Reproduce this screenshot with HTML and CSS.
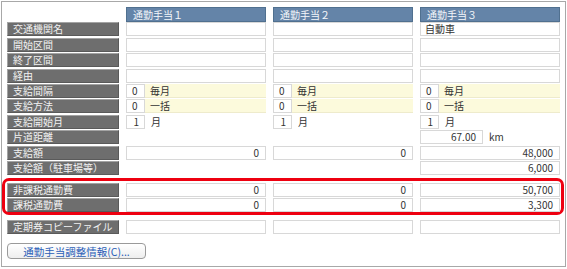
FILE: index.html
```html
<!DOCTYPE html>
<html lang="ja">
<head>
    <meta charset="UTF-8">
    <title>通勤手当</title>
    <link rel="stylesheet" href="styles.css">
</head>
<body>
    <div class="frame">
        <div class="sheet">
            <div></div>
            <div class="head">通勤手当１</div>
            <div class="head">通勤手当２</div>
            <div class="head">通勤手当３</div>

            <div class="label">交通機関名</div>
            <div class="cell"></div>
            <div class="cell"></div>
            <div class="cell">自動車</div>

            <div class="label">開始区間</div>
            <div class="cell"></div>
            <div class="cell"></div>
            <div class="cell"></div>

            <div class="label">終了区間</div>
            <div class="cell"></div>
            <div class="cell"></div>
            <div class="cell"></div>

            <div class="label">経由</div>
            <div class="cell"></div>
            <div class="cell"></div>
            <div class="cell"></div>

            <div class="label">支給間隔</div>
            <div class="pair"><span class="code">0</span><span class="pick">毎月</span></div>
            <div class="pair"><span class="code">0</span><span class="pick">毎月</span></div>
            <div class="pair"><span class="code">0</span><span class="pick">毎月</span></div>

            <div class="label">支給方法</div>
            <div class="pair"><span class="code">0</span><span class="pick">一括</span></div>
            <div class="pair"><span class="code">0</span><span class="pick">一括</span></div>
            <div class="pair"><span class="code">0</span><span class="pick">一括</span></div>

            <div class="label">支給開始月</div>
            <div class="pair"><span class="code num">1</span><span class="unit">月</span></div>
            <div class="pair"><span class="code num">1</span><span class="unit">月</span></div>
            <div class="pair"><span class="code num">1</span><span class="unit">月</span></div>

            <div class="label">片道距離</div>
            <div></div>
            <div></div>
            <div class="pair"><span class="dist">67.00</span><span class="unit">km</span></div>

            <div class="label">支給額</div>
            <div class="cell num">0</div>
            <div class="cell num">0</div>
            <div class="cell num">48,000</div>

            <div class="label">支給額（駐車場等）</div>
            <div></div>
            <div></div>
            <div class="cell num">6,000</div>
        </div>

        <div class="sheet marked">
            <div class="label">非課税通勤費</div>
            <div class="cell num">0</div>
            <div class="cell num">0</div>
            <div class="cell num">50,700</div>

            <div class="label">課税通勤費</div>
            <div class="cell num">0</div>
            <div class="cell num">0</div>
            <div class="cell num">3,300</div>
        </div>

        <div class="sheet copy">
            <div class="label">定期券コピーファイル</div>
            <div class="cell"></div>
            <div class="cell"></div>
            <div class="cell"></div>
        </div>

        <button class="adjust">通勤手当調整情報(C)...</button>
    </div>
</body>
</html>
```

FILE: styles.css
```css
body {
    margin: 1px;
    background-color: #ffffff;
    font-family: "Noto Sans CJK JP", "Noto Sans", sans-serif;
    font-size: 10px;
    color: #333333;
}

.frame {
    box-sizing: border-box;
    width: 565px;
    height: 266px;
    border: 1px solid #a8a8a8;
    padding: 5px 5px 0 5px;
}

/* 表 */
.sheet {
    display: grid;
    grid-template-columns: 112px 140px 140px 140px;
    grid-auto-rows: 14px;
    column-gap: 7px;
    row-gap: 1.4px;
    line-height: 12px;
}

.sheet > div {
    box-sizing: border-box;
    white-space: nowrap;
}

.head {
    height: 15px;
    background-color: #6484a8;
    border: 1px solid #50708f;
    color: #f4f7fb;
    padding-left: 6px;
    line-height: 13px;
}

.label {
    background-color: #6e6e6e;
    border: 1px solid #a3a3a3;
    border-right-color: #5a5a5a;
    border-bottom-color: #5a5a5a;
    color: #f2f2f2;
    padding-left: 5px;
}

.cell {
    background-color: #ffffff;
    border: 1px solid #d8d8d8;
    padding: 0 4px;
}

.num {
    text-align: right;
    padding-right: 6px;
}

.pair {
    display: flex;
}

.code {
    box-sizing: border-box;
    width: 19px;
    border: 1px solid #d8d8d8;
    background-color: #ffffff;
    padding-left: 5px;
}

.code.num {
    padding-right: 5px;
}

.pick {
    flex: 1;
    background-color: #fcfadc;
    border-bottom: 1px solid #eeebcc;
    padding-left: 5px;
    line-height: 14px;
}

.dist {
    box-sizing: border-box;
    width: 63px;
    border: 1px solid #d8d8d8;
    text-align: right;
    padding-right: 6px;
}

.unit {
    padding-left: 6px;
    line-height: 14px;
}

/* 赤枠 */
.marked {
    margin: 3px -4px 0 -5px;
    padding: 2px 0 0 2px;
    border: 3px solid #ee0010;
    border-radius: 7px;
}

.copy {
    margin-top: 5px;
}

.adjust {
    display: block;
    margin-top: 9px;
    width: 139px;
    height: 16px;
    padding: 0;
    border: 1px solid #9a9a9a;
    border-radius: 4px;
    background: linear-gradient(#ffffff, #eeeeee);
    color: #2b5fb8;
    font-family: "Noto Sans CJK JP", "Noto Sans", sans-serif;
    font-size: 10.5px;
    line-height: 13px;
    cursor: pointer;
}
```
